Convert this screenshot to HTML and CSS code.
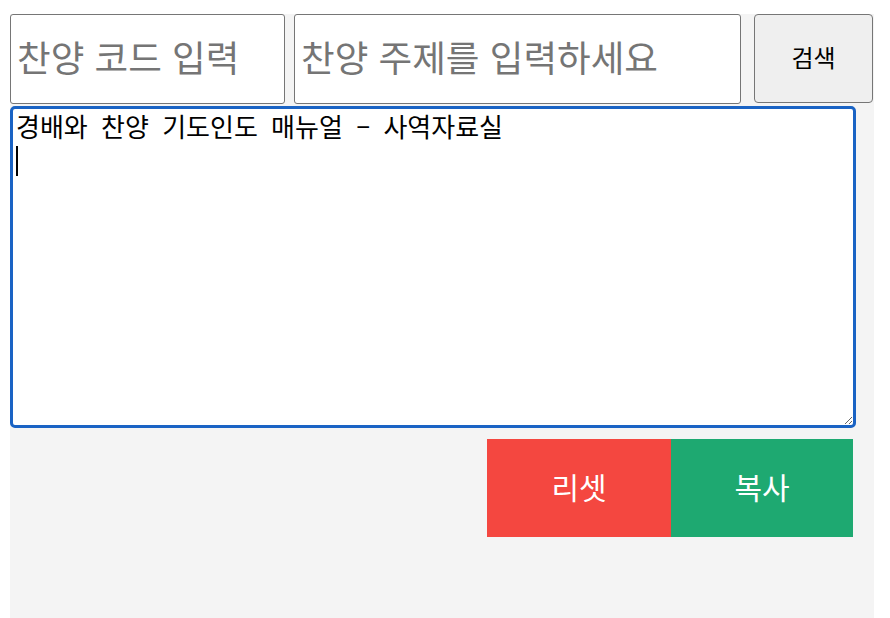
FILE: index.html
```html
<!DOCTYPE html>
<html lang="ko">
<head>
<meta charset="utf-8">
<title>찬양</title>
<link rel="stylesheet" href="styles.css">
</head>
<body>
<div class="panel">
  <div class="search-row">
    <input class="code-input" type="text" placeholder="찬양 코드 입력">
    <input class="topic-input" type="text" placeholder="찬양 주제를 입력하세요">
    <button class="search-btn">검색</button>
  </div>
  <div class="editor">
    <textarea class="content">경배와 찬양 기도인도 매뉴얼 – 사역자료실
</textarea>
    <span class="caret"></span>
  </div>
  <div class="actions">
    <button class="btn reset">리셋</button>
    <button class="btn copy">복사</button>
  </div>
</div>
</body>
</html>
```
FILE: styles.css
```css
html, body {
  margin: 0;
  padding: 0;
  background: #ffffff;
  overflow: hidden;
}
body {
  padding: 14px 0 0 10px;
  font-family: "Noto Sans CJK KR", "Noto Sans", sans-serif;
}
.panel {
  width: 864px;
  height: 620px;
  background: #f4f4f4;
}
.search-row {
  display: flex;
  align-items: flex-start;
  height: 92px;
}
.code-input,
.topic-input {
  box-sizing: border-box;
  height: 90px;
  border: 1px solid #767676;
  border-radius: 3px;
  background: #fff;
  padding: 0 5px 5px 6px;
  font-family: "Noto Sans CJK KR", sans-serif;
  font-size: 36.6px;
  color: #222;
  margin: 0;
}
.code-input::placeholder,
.topic-input::placeholder {
  color: #757575;
}
.code-input {
  width: 275px;
}
.topic-input {
  width: 447px;
  margin-left: 9px;
}
.search-btn {
  box-sizing: border-box;
  width: 119px;
  height: 89px;
  margin-left: 13px;
  border: 1px solid #767676;
  border-radius: 4px;
  background: #efefef;
  font-family: "Noto Sans CJK KR", sans-serif;
  font-size: 24px;
  color: #000;
  padding: 0 0 4px;
}
.editor {
  position: relative;
  width: 846px;
}
.content {
  display: block;
  box-sizing: border-box;
  width: 846px;
  height: 322px;
  margin: 0;
  border: 3px solid #1a63c4;
  border-radius: 5px;
  outline: none;
  padding: 0 3px;
  font-family: "Noto Sans CJK KR", sans-serif;
  font-size: 26px;
  line-height: 34px;
  word-spacing: 6px;
  color: #000;
  background: #fff;
}
.caret {
  position: absolute;
  left: 6px;
  top: 40px;
  width: 2px;
  height: 30px;
  background: #000;
}
.actions {
  display: flex;
  justify-content: flex-end;
  width: 843px;
  margin-top: 11px;
}
.btn {
  height: 98px;
  border: none;
  border-radius: 0;
  color: #fff;
  font-family: "Noto Sans CJK KR", sans-serif;
  font-size: 30px;
  padding: 0 0 4px;
}
.reset {
  width: 184px;
  background: #f44740;
}
.copy {
  width: 182px;
  background: #1ea971;
}
```
